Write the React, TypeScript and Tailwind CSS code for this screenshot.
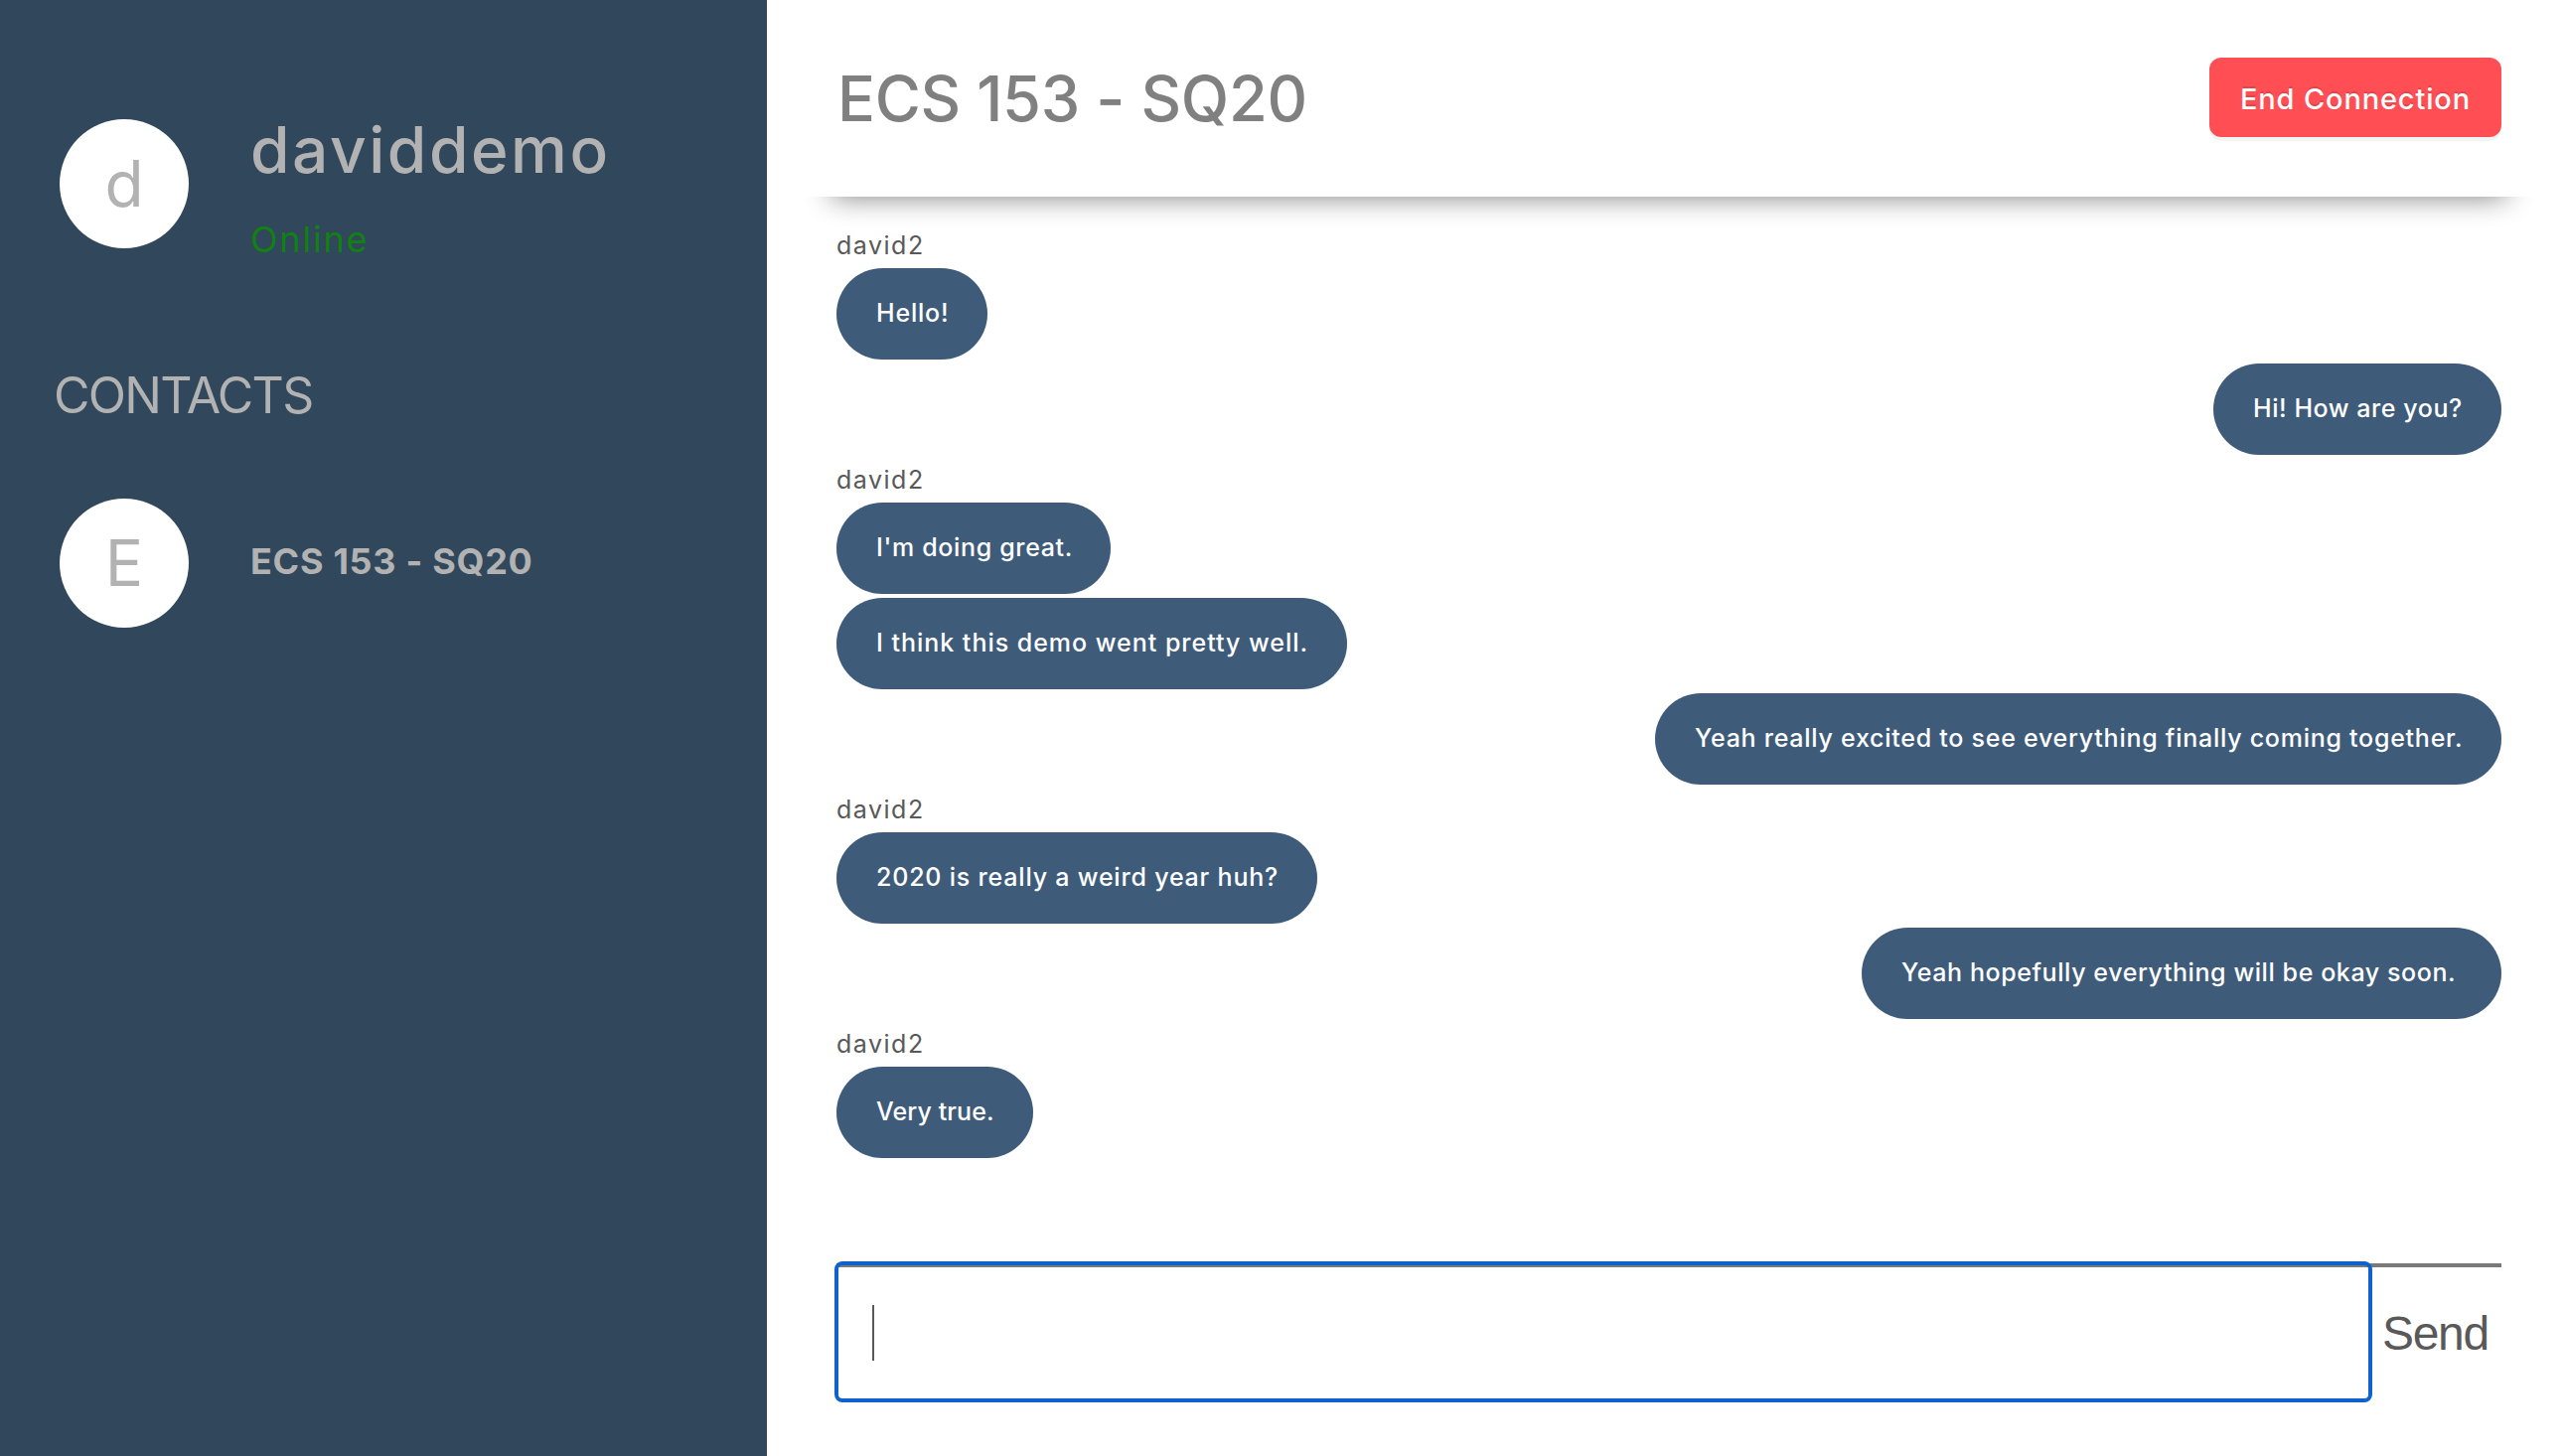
type Message = {
  text: string;
  box: string;
  sender?: string;
  mine?: boolean;
};

const messages: Message[] = [
  { sender: "david2", text: "Hello!", box: "w-[152px] tracking-[0.8px]" },
  { mine: true, text: "Hi! How are you?", box: "w-[290px] tracking-[0.56px]" },
  { sender: "david2", text: "I'm doing great.", box: "w-[276px] tracking-[0.66px]" },
  { text: "I think this demo went pretty well.", box: "w-[514px] tracking-[0.98px]" },
  {
    mine: true,
    text: "Yeah really excited to see everything finally coming together.",
    box: "w-[852px] tracking-[0.74px]",
  },
  { sender: "david2", text: "2020 is really a weird year huh?", box: "w-[484px] tracking-[0.8px]" },
  {
    mine: true,
    text: "Yeah hopefully everything will be okay soon.",
    box: "w-[644px] tracking-[0.58px]",
  },
  { sender: "david2", text: "Very true.", box: "w-[198px] tracking-[0.1px]" },
];

function Avatar({ letter }: { letter: string }) {
  return (
    <div className="flex h-[130px] w-[130px] shrink-0 items-center justify-center rounded-full bg-white text-[64px] leading-none font-normal text-[#b2b2b2]">
      {letter}
    </div>
  );
}

function Sidebar() {
  return (
    <aside className="flex w-[772px] shrink-0 flex-col bg-[#30475c] font-medium text-[#b2b2b2]">
      <div className="mt-[115px] flex gap-[61px] pl-[60px]">
        <div className="pt-[5px]">
          <Avatar letter="d" />
        </div>
        <div>
          <div className="pl-px text-[64px] leading-[71px] tracking-[2.5px]">daviddemo</div>
          <div className="mt-[35px] pl-px text-[36px] leading-10 font-normal tracking-[1.8px] text-[#118112]">
            Online
          </div>
        </div>
      </div>
      <h2 className="mt-[107px] pl-[54px] text-[50px] leading-[60px] font-normal tracking-[-1.7px]">CONTACTS</h2>
      <div className="mt-[74px] flex items-center gap-[62px] pl-[60px]">
        <Avatar letter="E" />
        <div className="pb-1 text-[36px] leading-[44px] font-bold tracking-[0.7px]">ECS 153 - SQ20</div>
      </div>
    </aside>
  );
}

function Bubble({ message }: { message: Message }) {
  return (
    <li className={message.mine ? "mb-1 flex flex-col items-end" : "mb-1 flex flex-col items-start"}>
      {message.sender && (
        <div className="h-11 text-[25px] leading-[42px] tracking-[1.5px] text-[#595959]">{message.sender}</div>
      )}
      <div
        className={`flex h-[92px] items-center rounded-[46px] bg-[#3e5c7a] pl-10 text-[25px] font-medium whitespace-nowrap text-white ${message.box}`}
      >
        {message.text}
      </div>
    </li>
  );
}

export default function App() {
  return (
    <div className="flex h-[1466px] w-[2582px] overflow-hidden bg-white font-['Inter',sans-serif]">
      <Sidebar />
      <main className="flex min-w-0 flex-1 flex-col">
        <header className="flex h-[198px] shrink-0 items-start justify-between pr-16 pl-[71px]">
          <h1 className="mt-[63px] text-[63px] leading-[72px] font-medium tracking-[-0.35px] text-[#808080]">
            ECS 153 - SQ20
          </h1>
          <button className="mt-[58px] h-20 w-[294px] rounded-xl bg-[#ff4f54] pt-[3px] pl-[31px] text-left text-[29px] font-medium tracking-[0.84px] text-white shadow-[0_4px_0_rgba(0,0,0,0.045)] [text-shadow:0_-2px_0_rgba(0,0,0,0.12)]">
            End Connection
          </button>
        </header>
        <section className="flex-1 overflow-hidden pr-16 pl-[70px]">
          {/* Shadow cast by the header onto the message list */}
          <div className="-mt-[60px] h-[60px] shadow-[0_-4px_28px_5px_rgba(0,0,0,0.48)]" />
          <ul className="pt-7">
            {messages.map((m) => (
              <Bubble key={m.text} message={m} />
            ))}
          </ul>
        </section>
        <form className="mr-16 ml-[70px] flex h-[194px] shrink-0 border-t-4 border-[#7a7a7a]">
          <div className="-mt-[6px] -ml-[2px] h-[142px] w-[1548px] rounded-lg border-4 border-[#0f62ce] pt-10 pl-[34px]">
            <div className="h-14 w-[2px] bg-[#595959]" />
          </div>
          <div className="ml-[10px] pt-[37px] font-['Liberation_Sans',sans-serif] text-[48px] leading-[60px] tracking-[-1.3px] text-[#595959]">
            Send
          </div>
        </form>
      </main>
    </div>
  );
}
